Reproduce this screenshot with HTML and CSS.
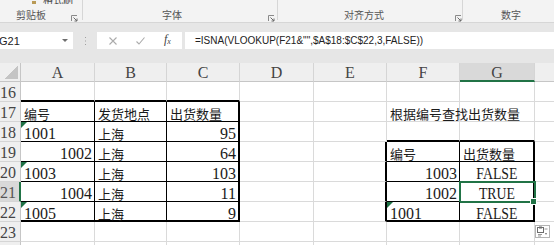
FILE: index.html
```html
<!DOCTYPE html>
<html>
<head>
<meta charset="utf-8">
<link rel="stylesheet" href="styles.css">
</head>
<body>
<div class="ribbon">
  <div class="grp g1">
    <div class="top"><span class="brush"></span><span class="topt">格式刷</span></div>
    <div class="lrow"><span class="glabel l1">剪贴板</span><svg class="launch" width="7" height="7" viewBox="0 0 7 7"><path d="M0.5 6V0.5H6" fill="none" stroke="#8a8a8a"/><path d="M2.5 2.5L6 6M6 3.5V6H3.5" fill="none" stroke="#6a6a6a"/></svg></div>
  </div>
  <div class="grp g2">
    <div class="top"></div>
    <div class="lrow"><span class="glabel l2">字体</span><svg class="launch" width="7" height="7" viewBox="0 0 7 7"><path d="M0.5 6V0.5H6" fill="none" stroke="#8a8a8a"/><path d="M2.5 2.5L6 6M6 3.5V6H3.5" fill="none" stroke="#6a6a6a"/></svg></div>
  </div>
  <div class="grp g3">
    <div class="top"></div>
    <div class="lrow"><span class="glabel l3">对齐方式</span><svg class="launch" width="7" height="7" viewBox="0 0 7 7"><path d="M0.5 6V0.5H6" fill="none" stroke="#8a8a8a"/><path d="M2.5 2.5L6 6M6 3.5V6H3.5" fill="none" stroke="#6a6a6a"/></svg></div>
  </div>
  <div class="grp g4">
    <div class="top"></div>
    <div class="lrow"><span class="glabel l4">数字</span></div>
  </div>
</div>

<div class="fbar">
  <div class="namebox"><span class="nm">G21</span><span class="dd"></span></div>
  <div class="grip"><svg width="3" height="10" viewBox="0 0 3 10"><rect x="1" y="1" width="1" height="1" fill="#a0a0a0"/><rect x="1" y="4.5" width="1" height="1" fill="#a0a0a0"/><rect x="1" y="8" width="1" height="1" fill="#a0a0a0"/></svg></div>
  <div class="btns">
    <svg class="bx" width="8" height="8" viewBox="0 0 8 8"><path d="M0.5 0.5L7.5 7.5M7.5 0.5L0.5 7.5" stroke="#ababab" stroke-width="1.1"/></svg>
    <svg class="bok" width="9" height="8" viewBox="0 0 9 8"><path d="M0.5 4.5L3 7L8.5 0.5" fill="none" stroke="#ababab" stroke-width="1.1"/></svg>
    <span class="fx"><i>f</i><sub>x</sub></span>
  </div>
  <div class="formula">=ISNA(VLOOKUP(F21&amp;"",$A$18:$C$22,3,FALSE))</div>
</div>

<div class="sheet">
  <div class="corner"></div>
  <div class="ch">A</div><div class="ch">B</div><div class="ch">C</div><div class="ch">D</div><div class="ch">E</div><div class="ch">F</div><div class="ch chs">G</div><div class="ch"></div>

  <div class="rh">16</div>
  <div class="c B"></div><div class="c B"></div><div class="c B"></div><div class="c"></div><div class="c"></div><div class="c"></div><div class="c"></div><div class="c"></div>

  <div class="rh">17</div>
  <div class="c r b"><span class="zh">编号</span></div><div class="c r b"><span class="zh">发货地点</span></div><div class="c R b"><span class="zh">出货数量</span></div><div class="c"></div><div class="c"></div><div class="c"><span class="zh">根据编号查找出货数量</span></div><div class="c"></div><div class="c"></div>

  <div class="rh">18</div>
  <div class="c r b err">1001</div><div class="c r b"><span class="zh">上海</span></div><div class="c R b n">95</div><div class="c"></div><div class="c"></div><div class="c B"></div><div class="c B"></div><div class="c"></div>

  <div class="rh">19</div>
  <div class="c r b n">1002</div><div class="c r b"><span class="zh">上海</span></div><div class="c R b n">64</div><div class="c"></div><div class="c R"></div><div class="c r b"><span class="zh">编号</span></div><div class="c R b"><span class="zh">出货数量</span></div><div class="c"></div>

  <div class="rh">20</div>
  <div class="c r b err">1003</div><div class="c r b"><span class="zh">上海</span></div><div class="c R b n">103</div><div class="c"></div><div class="c R"></div><div class="c r b n">1003</div><div class="c R b ctr"><span class="bool">FALSE</span></div><div class="c"></div>

  <div class="rh rhs">21</div>
  <div class="c r b n">1004</div><div class="c r b"><span class="zh">上海</span></div><div class="c R b n">11</div><div class="c"></div><div class="c R"></div><div class="c r b n">1002</div><div class="c R b ctr sel"><span class="bool">TRUE</span></div><div class="c"></div>

  <div class="rh">22</div>
  <div class="c r B err">1005</div><div class="c r B"><span class="zh">上海</span></div><div class="c R B n">9</div><div class="c"></div><div class="c R"></div><div class="c r B err">1001</div><div class="c R B ctr"><span class="bool">FALSE</span></div><div class="c"></div>

  <div class="rh">23</div>
  <div class="c"></div><div class="c"></div><div class="c"></div><div class="c"></div><div class="c"></div><div class="c"></div><div class="c"></div><div class="c"></div>

  <div class="rh">24</div>
  <div class="c"></div><div class="c"></div><div class="c"></div><div class="c"></div><div class="c"></div><div class="c"></div><div class="c"></div><div class="c"></div>

  <div class="paste"><svg width="15" height="13" viewBox="0 0 15 13"><rect x="0.5" y="0.5" width="14" height="12" fill="#fff" stroke="#b4b4b4"/><rect x="2.5" y="2.5" width="6" height="5" fill="#fff" stroke="#6d6d6d"/><rect x="4" y="1.5" width="3" height="2" fill="#6d6d6d"/><path d="M9.5 4H12.5M3 9.5H7M3 11H6" stroke="#9a9a9a"/><path d="M10 8L12 8L11 10Z" fill="#6d6d6d"/></svg></div>
</div>
</body>
</html>
```

FILE: styles.css
```css
html, body {
  margin: 0;
  padding: 0;
}
body {
  width: 554px;
  height: 245px;
  overflow: hidden;
  background: #e6e6e6;
  font-family: "Liberation Sans", Arial, sans-serif;
}

/* ribbon */
.ribbon {
  display: flex;
  height: 22px;
  background: #f3f3f3;
  border-bottom: 1px solid #d6d6d6;
  overflow: hidden;
}
.grp {
  display: flex;
  flex-direction: column;
  border-right: 1px solid #d6d6d6;
  height: 20px;
}
.g1 { width: 82px; }
.g2 { width: 194px; }
.g3 { width: 184px; }
.g4 { flex: 1; border-right: 0; }
.top {
  height: 4px;
  display: flex;
  align-items: flex-end;
  overflow: hidden;
}
.brush {
  width: 4px;
  height: 3px;
  margin-left: 32px;
  margin-right: 7px;
  background: #b99a55;
}
.topt {
  font-family: "Noto Sans CJK SC", sans-serif;
  font-size: 10px;
  line-height: 10px;
  color: #444;
  margin-bottom: -1px;
}
.lrow {
  display: flex;
  align-items: flex-start;
  height: 16px;
}
.glabel {
  font-family: "Noto Sans CJK SC", sans-serif;
  font-size: 10px;
  line-height: 12px;
  color: #555;
  margin-top: 5px;
}
.l1 { margin-left: 16px; }
.l2 { margin-left: 79px; }
.l3 { margin-left: 66px; }
.l4 { margin-left: 38px; }
.launch {
  margin-left: auto;
  margin-top: 11px;
  margin-right: 4px;
}
.g2 .launch { margin-right: 2px; }
.g3 .launch { margin-right: 0; }

/* formula bar */
.fbar {
  display: flex;
  height: 17px;
  margin: 9px 0 14px;
}
.namebox {
  width: 73px;
  background: #fff;
  display: flex;
  align-items: center;
  font-size: 11px;
  color: #222;
}
.nm { margin-left: -1px; }
.dd {
  margin-left: auto;
  margin-right: 5px;
  width: 0;
  height: 0;
  border-left: 3px solid transparent;
  border-right: 3px solid transparent;
  border-top: 3px solid #6e6e6e;
}
.grip {
  width: 24px;
  display: flex;
  justify-content: center;
  align-items: center;
}
.btns {
  width: 85px;
  background: #fff;
  display: flex;
  align-items: center;
}
.bx { margin-left: 12px; }
.bok { margin-left: 19px; }
.fx {
  margin-left: 19px;
  font-family: "Liberation Serif", serif;
  font-size: 12px;
  color: #444;
  line-height: 12px;
}
.fx sub { font-size: 8px; vertical-align: -1px; font-style: italic; }
.formula {
  flex: 1;
  margin-left: 3px;
  background: #fff;
  padding-left: 10px;
  display: flex;
  align-items: center;
  font-size: 10px;
  color: #222;
  white-space: nowrap;
}

/* sheet */
.sheet {
  position: relative;
  display: grid;
  grid-template-columns: 21px 74px 72px 73px 74px 73px 73px 75px 40px;
  grid-template-rows: 19px repeat(9, 20px);
  background: #fff;
  font-family: "Liberation Serif", "Noto Sans CJK SC", serif;
}
.corner {
  background-color: #efefef;
  background-image: linear-gradient(to bottom right, transparent 50%, #c4c4c4 50%);
  background-size: 14px 14px;
  background-position: right 2px bottom 2px;
  background-repeat: no-repeat;
  border-right: 1px solid #c6c6c6;
  border-bottom: 1px solid #c6c6c6;
}
.ch {
  background: #efefef;
  border-right: 1px solid #d5d5d5;
  border-bottom: 1px solid #c6c6c6;
  text-align: center;
  font-size: 16px;
  line-height: 19px;
  color: #444;
}
.chs {
  background: #d9d9d9;
  border-bottom: 2px solid #217346;
}
.rh {
  background: #efefef;
  border-right: 1px solid #c6c6c6;
  border-bottom: 1px solid #d5d5d5;
  text-align: right;
  padding-right: 5px;
  font-size: 16px;
  line-height: 22px;
  color: #444;
  white-space: nowrap;
}
.rhs {
  background: #d9d9d9;
  border-right: 2px solid #217346;
  padding-right: 4px;
  color: #555;
}
.c {
  border-right: 1px solid #dadada;
  border-bottom: 1px solid #dadada;
  font-size: 16px;
  line-height: 24px;
  padding: 0 3px;
  white-space: nowrap;
  color: #1a1a1a;
  min-width: 0;
}
.n { text-align: right; padding-right: 2px; }
.ctr { text-align: center; padding: 0; }
.zh {
  font-family: "Noto Sans CJK SC", sans-serif;
  font-size: 13px;
}
.bool {
  display: inline-block;
  transform: scaleX(0.86);
}
.r { border-right-color: #000; }
.b { border-bottom-color: #000; }
.R { border-right: 2px solid #000; }
.B { border-bottom: 2px solid #000; }
.err { position: relative; }
.err::before {
  content: "";
  position: absolute;
  left: 0;
  top: 0;
  border-top: 6px solid #1e7145;
  border-right: 6px solid transparent;
}
.sel {
  position: relative;
  outline: 2px solid #217346;
  outline-offset: -1px;
}
.sel::after {
  content: "";
  position: absolute;
  right: -4px;
  bottom: -4px;
  width: 5px;
  height: 5px;
  background: #217346;
  border: 1px solid #fff;
}
.paste {
  position: absolute;
  left: 535px;
  top: 162px;
  width: 15px;
  height: 13px;
}
.paste svg { display: block; }
```
